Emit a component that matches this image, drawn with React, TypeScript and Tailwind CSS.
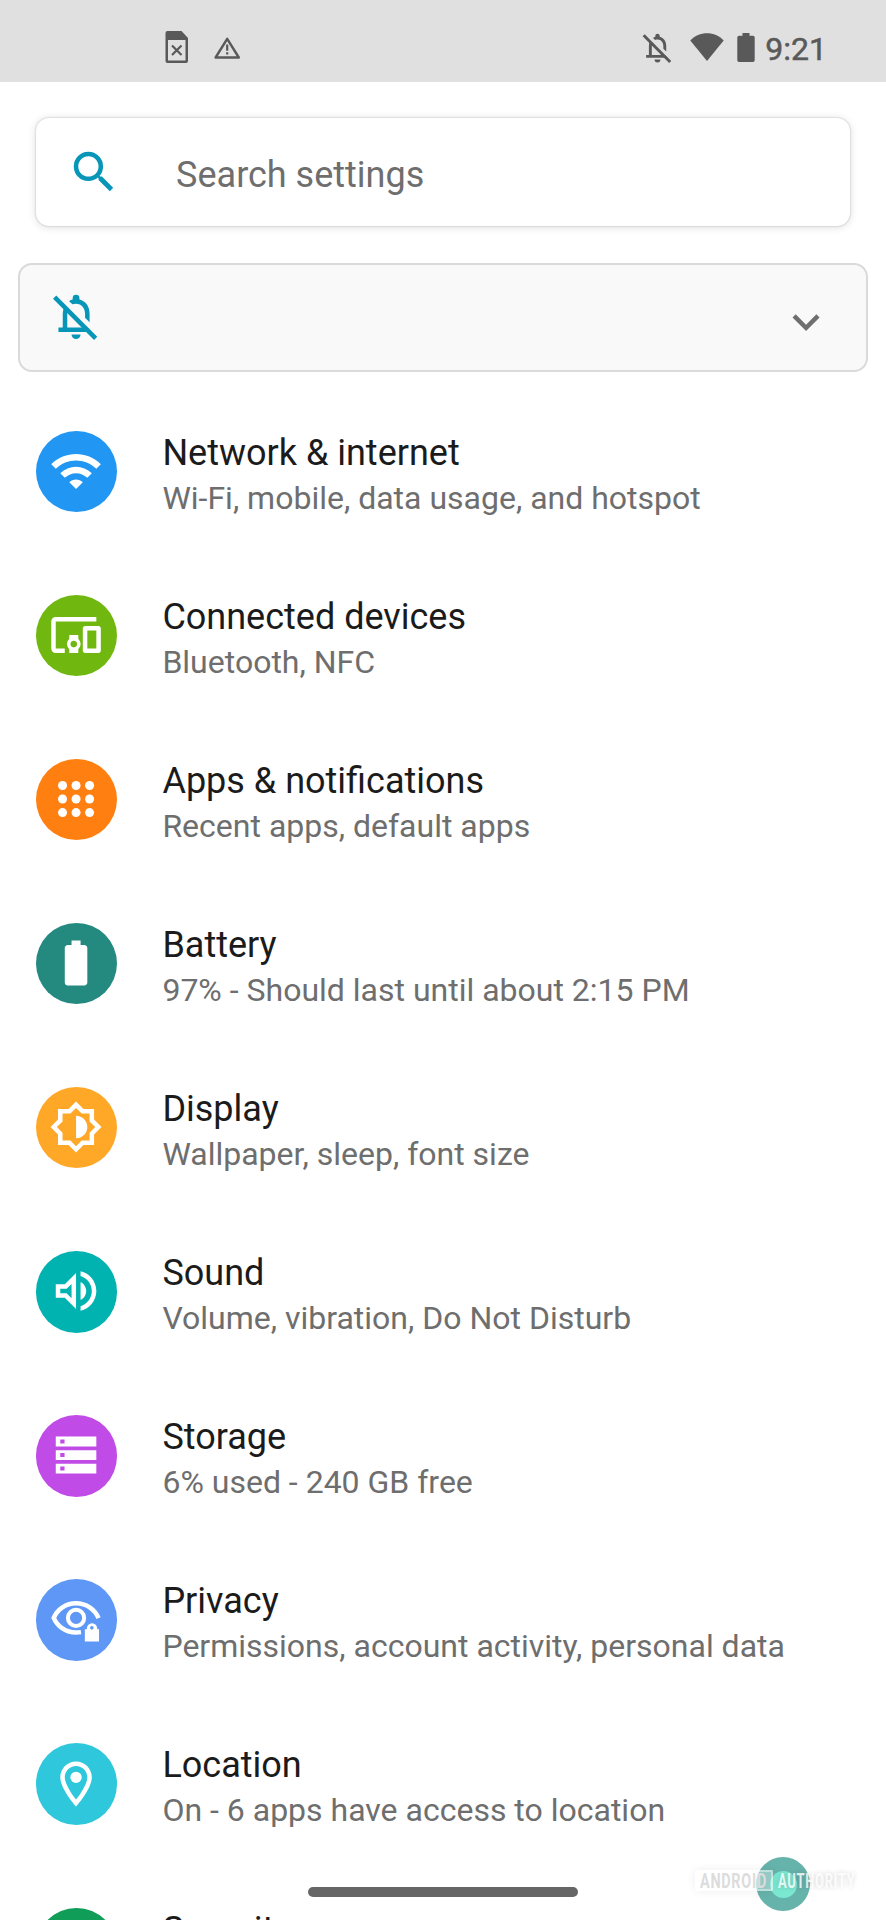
import type { ReactNode } from 'react'

interface SettingItem {
  title: string
  summary?: string
  color: string
  icon?: ReactNode
}

const items: SettingItem[] = [
  {
    title: 'Network & internet',
    summary: 'Wi-Fi, mobile, data usage, and hotspot',
    color: 'bg-[#2196f3]',
    icon: (
      <path d="M1 9l2 2c4.97-4.97 13.03-4.97 18 0l2-2C16.93 2.93 7.08 2.93 1 9zm8 8l3 3 3-3c-1.65-1.66-4.34-1.66-6 0zm-4-4l2 2c2.76-2.76 7.24-2.76 10 0l2-2C15.14 9.14 8.87 9.14 5 13z" />
    ),
  },
  {
    title: 'Connected devices',
    summary: 'Bluetooth, NFC',
    color: 'bg-[#70b80f]',
    icon: (
      <path d="M3 6h18V4H3c-1.1 0-2 .9-2 2v12c0 1.1.9 2 2 2h4v-2H3V6zm10 6H9v1.78c-.61.55-1 1.33-1 2.22s.39 1.67 1 2.22V20h4v-1.78c.61-.55 1-1.34 1-2.22s-.39-1.67-1-2.22V12zm-2 5.5c-.83 0-1.5-.67-1.5-1.5s.67-1.5 1.5-1.5 1.5.67 1.5 1.5-.67 1.5-1.5 1.5zM22 8h-6c-.5 0-1 .5-1 1v10c0 .5.5 1 1 1h6c.5 0 1-.5 1-1V9c0-.5-.5-1-1-1zm-1 10h-4v-8h4v8z" />
    ),
  },
  {
    title: 'Apps & notifications',
    summary: 'Recent apps, default apps',
    color: 'bg-[#ff7f10]',
    icon: (
      <>
        {[6, 12, 18].map((cy) =>
          [6, 12, 18].map((cx) => <circle key={`${cx}-${cy}`} cx={cx} cy={cy} r="2" />)
        )}
      </>
    ),
  },
  {
    title: 'Battery',
    summary: '97% - Should last until about 2:15 PM',
    color: 'bg-[#248a80]',
    icon: (
      <path d="M15.67 4H14V2h-4v2H8.33C7.6 4 7 4.6 7 5.33v15.33C7 21.4 7.6 22 8.33 22h7.33c.74 0 1.34-.6 1.34-1.33V5.33C17 4.6 16.4 4 15.67 4z" />
    ),
  },
  {
    title: 'Display',
    summary: 'Wallpaper, sleep, font size',
    color: 'bg-[#ffa726]',
    icon: (
      <>
        <path d="M20 8.69V4h-4.69L12 .69 8.69 4H4v4.69L.69 12 4 15.31V20h4.69L12 23.31 15.31 20H20v-4.69L23.31 12 20 8.69zm-2 5.79V18h-3.52L12 20.48 9.52 18H6v-3.52L3.52 12 6 9.52V6h3.52L12 3.52 14.48 6H18v3.52L20.48 12 18 14.48z" />
        <path d="M12 7v10c2.76 0 5-2.24 5-5s-2.24-5-5-5z" />
      </>
    ),
  },
  {
    title: 'Sound',
    summary: 'Volume, vibration, Do Not Disturb',
    color: 'bg-[#00b2b0]',
    icon: (
      <path d="M3 9v6h4l5 5V4L7 9H3zm7-.17v6.34L7.83 13H5v-2h2.83L10 8.83zM16.5 12c0-1.77-1.02-3.29-2.5-4.03v8.05c1.48-.73 2.5-2.25 2.5-4.02zM14 3.23v2.06c2.89.86 5 3.54 5 6.71s-2.11 5.85-5 6.71v2.06c4.01-.91 7-4.49 7-8.77s-2.99-7.86-7-8.77z" />
    ),
  },
  {
    title: 'Storage',
    summary: '6% used - 240 GB free',
    color: 'bg-[#c04be6]',
    icon: (
      <path d="M3 3.8h18v4.4H3V3.8zm2 1.3v1.8h1.9V5.1H5zM3 9.9h18v4.3H3V9.9zm2 1.2v1.8h1.9v-1.8H5zM3 15.9h18v4.3H3v-4.3zm2 1.2v1.8h1.9v-1.8H5z" />
    ),
  },
  {
    title: 'Privacy',
    summary: 'Permissions, account activity, personal data',
    color: 'bg-[#5e97f6]',
    icon: (
      <>
        <path
          d="M22 11.6C20.3 7.7 16.5 5 12 5S3.7 7.7 2.1 11.5C3.7 15.3 7.5 18 12 18c.8 0 1.5-.1 2.2-.2"
          fill="none"
          stroke="currentColor"
          strokeWidth="2"
        />
        <circle cx="12" cy="11.5" r="3.6" fill="none" stroke="currentColor" strokeWidth="1.8" />
        {/* lock badge, separated from the eye by a gap */}
        <path
          d="M15.9 16.5h.9v-.3a2.3 2.3 0 0 1 4.6 0v.3h.8V22h-6.3z"
          stroke="#5e97f6"
          strokeWidth="2.6"
        />
        <path d="M15.9 16.5h.9v-.3a2.3 2.3 0 0 1 4.6 0v.3h.8V22h-6.3z" />
        <circle cx="19" cy="15.9" r=".8" fill="#5e97f6" />
      </>
    ),
  },
  {
    title: 'Location',
    summary: 'On - 6 apps have access to location',
    color: 'bg-[#2fc7db]',
    icon: (
      <>
        <path d="M12 2C8.13 2 5 5.13 5 9c0 5.25 7 13 7 13s7-7.75 7-13c0-3.87-3.13-7-7-7zM7 9c0-2.76 2.24-5 5-5s5 2.24 5 5c0 2.88-2.88 7.19-5 9.88C9.92 16.21 7 11.85 7 9z" />
        <circle cx="12" cy="9" r="2.5" />
      </>
    ),
  },
  {
    title: 'Security',
    color: 'bg-[#0f9d58]',
  },
]

function BellOffIcon({ className }: { className: string }) {
  return (
    <svg viewBox="0 0 24 24" fill="currentColor" className={className}>
      <path d="M10.5 4.68V4a1.5 1.5 0 0 1 3 0v.68C16.36 5.36 18 7.92 18 11v3.8l-2-2V11c0-2.5-1.5-4.5-4-4.5-.6 0-1.1.1-1.6.3L8.9 5.4c.5-.35 1-.6 1.6-.72z" />
      <path d="M6.1 17.1V11c0-1 .2-1.9.6-2.7l1.6 1.6c-.1.4-.2.7-.2 1.1v6.1H17l2 2H4.200v-2z" />
      <path d="M10 20.2h4a2 2 0 0 1-4 0z" />
      <path d="M2.5 3.6l18.200 18.300" fill="none" stroke="currentColor" strokeWidth="2" />
    </svg>
  )
}

function StatusBar() {
  return (
    <header className="flex h-[82px] shrink-0 items-start justify-between bg-[#e0e0e0] pr-[59px] pl-[165px] text-[#595959]">
      <div className="flex gap-[26px] pt-[31px]">
        <svg viewBox="0 0 23 32" fill="currentColor" className="h-8 w-[23px]">
          <path
            fillRule="evenodd"
            d="M2.500 0h14L23 7v23a2 2 0 0 1-2 2H2.500a2 2 0 0 1-2-2V2a2 2 0 0 1 2-2zM3 9v20.500h17.500V9z"
          />
          <path d="M7 14.500l9.500 9.500M16.500 14.500L7 24" fill="none" stroke="currentColor" strokeWidth="2.200" />
        </svg>
        <svg viewBox="0 0 26 22" fill="currentColor" className="mt-1.5 h-[22px] w-[26px]">
          <path d="M13.200 1.800L24.800 20.500H1.600z" fill="none" stroke="currentColor" strokeWidth="2.400" strokeLinejoin="round" />
          <path d="M12.100 7.500h2.200v6.300h-2.200zM12.100 15.300h2.200v2.200h-2.200z" />
        </svg>
      </div>
      <div className="flex items-start">
        <BellOffIcon className="mt-[30px] h-[35px] w-[35px]" />
        <svg viewBox="0 0 34 28" fill="currentColor" className="mt-[33px] ml-[15px] h-7 w-[34px]">
          <path d="M17 28L.3 7.500C5 2.500 10.500.2 17 .2S29 2.500 33.700 7.500z" />
        </svg>
        <svg viewBox="0 0 18 29" fill="currentColor" className="mt-[33px] ml-[13px] h-[29px] w-[18px]">
          <path d="M5.500 0h7v2.800H16a1.700 1.700 0 0 1 1.700 1.700v22.800A1.700 1.700 0 0 1 16 29H2a1.700 1.700 0 0 1-1.700-1.700V4.500A1.700 1.700 0 0 1 2 2.800h3.500z" />
        </svg>
        <span className="mt-[29px] ml-[10px] text-[32px] leading-10 [-webkit-text-stroke:0.5px_#595959]">9:21</span>
      </div>
    </header>
  )
}

function SettingRow({ item }: { item: SettingItem }) {
  return (
    <li className="flex h-[164.1px] shrink-0 items-start pl-9">
      <div className={`flex size-[81.4px] shrink-0 items-center justify-center rounded-full pr-px pb-px text-white ${item.color}`}>
        <svg viewBox="0 0 24 24" fill="currentColor" className="size-[54.1px]">
          {item.icon}
        </svg>
      </div>
      <div className="ml-[45px] pt-px whitespace-nowrap">
        <div className="text-[36px] leading-[43px] text-[#1b1b1b]">{item.title}</div>
        {item.summary && (
          <div className="text-[32px] leading-[47px] text-[#6e6e6e]">{item.summary}</div>
        )}
      </div>
    </li>
  )
}

export default function App() {
  return (
    <div className="relative flex h-[1920px] w-[886px] flex-col overflow-hidden bg-white font-[Roboto,sans-serif]">
      <StatusBar />

      <div className="mx-9 mt-9 flex h-[108px] shrink-0 items-center rounded-[13px] bg-white pl-[31px] shadow-[0_0_2px_rgba(0,0,0,0.25),0_1px_8px_rgba(0,0,0,0.14)]">
        <svg viewBox="0 0 24 24" fill="currentColor" className="size-[54.1px] text-[#0795b8]">
          <path d="M15.5 14h-.79l-.28-.27A6.471 6.471 0 0 0 16 9.5 6.5 6.5 0 1 0 9.5 16c1.610 0 3.090-.590 4.230-1.570l.27.280v.79l5 4.990L20.490 19l-4.990-5zm-6 0C7.010 14 5 11.990 5 9.500S7.010 5 9.500 5 14 7.010 14 9.500 11.990 14 9.500 14z" />
        </svg>
        <span className="mt-[5px] ml-[55px] text-[36px] text-[#6e6e6e]">Search settings</span>
      </div>

      <div className="mx-[18px] mt-[37px] flex h-[109px] shrink-0 items-center justify-between rounded-[14px] border-2 border-[#dadada] bg-[#f9f9f9] pr-[33px] pl-[29px]">
        <BellOffIcon className="mb-0.5 size-[54.1px] text-[#0795b8]" />
        <svg viewBox="0 0 24 24" fill="currentColor" className="mt-2.5 size-[54.1px] text-[#6f6f6f]">
          <path d="M16.590 8.590L12 13.170 7.410 8.590 6 10l6 6 6-6z" />
        </svg>
      </div>

      <ul className="mt-[58.7px] flex flex-col">
        {items.map((item) => (
          <SettingRow key={item.title} item={item} />
        ))}
      </ul>

      {/* gesture handle */}
      <div className="absolute top-[1887px] left-[308px] h-[10px] w-[270px] rounded-full bg-[#666666]" />

      {/* touch indicator */}
      <div className="absolute top-[1857px] left-[756px] flex size-[54px] items-center justify-center rounded-full bg-[#66b3ac]">
        <div className="size-[27px] rounded-full bg-[#7be8d2]" />
      </div>

      {/* watermark */}
      <div className="absolute top-[1870px] left-[695px] flex h-[21px] items-center text-[20px] leading-none font-bold">
        <div className="relative h-full w-[78px] rounded-[2px] bg-white/30 shadow-[0_0_10px_rgba(0,0,0,0.07)]">
          <span className="absolute top-[0.5px] left-[5px] origin-left scale-x-[0.72] tracking-[1px] text-[#dcdcdc]">ANDROID</span>
          <div className="absolute top-0 right-0 h-full w-[17px] border-2 border-white/40" />
        </div>
        <div className="ml-[5px] w-[80px]">
          <span className="inline-block origin-left scale-x-[0.65] tracking-[1px] text-white/80 [text-shadow:0_0_6px_rgba(0,0,0,0.18)]">AUTHORITY</span>
        </div>
      </div>
    </div>
  )
}
